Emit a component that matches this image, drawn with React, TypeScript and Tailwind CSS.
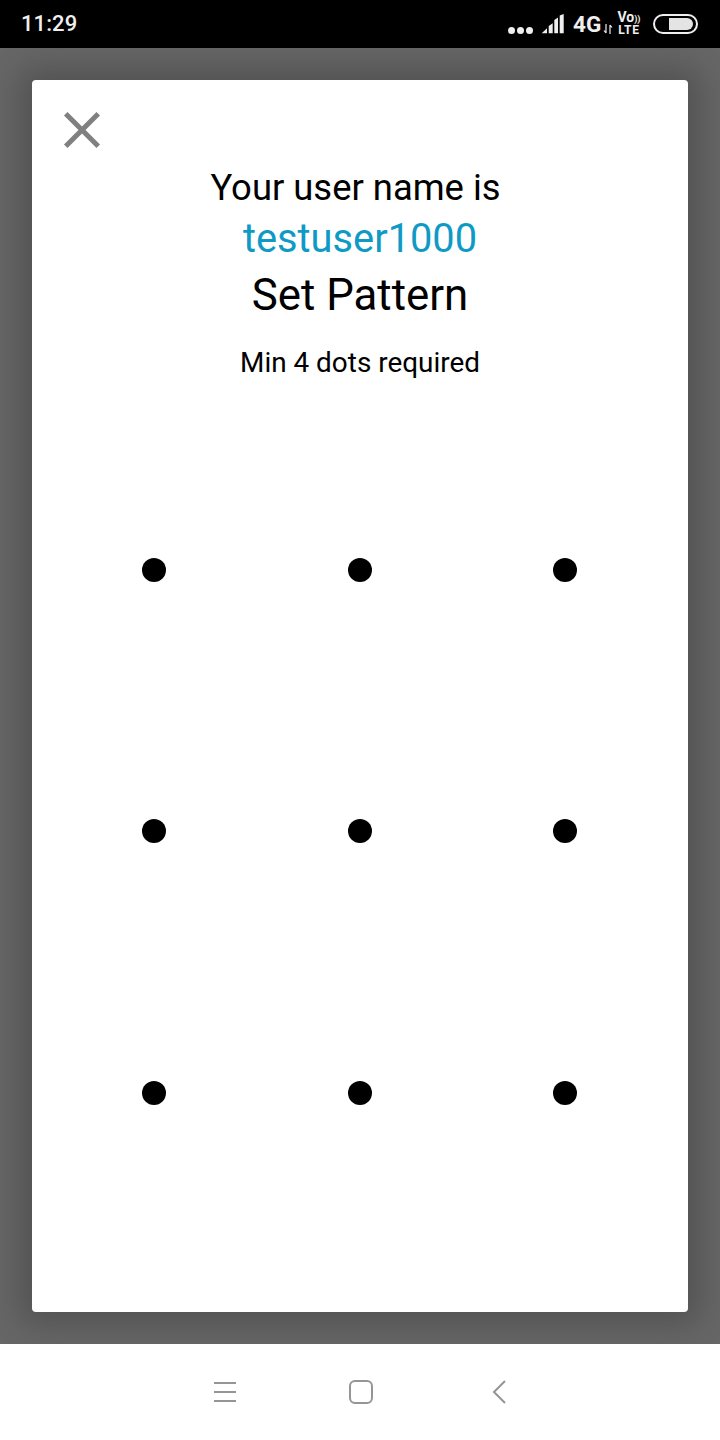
const DOT_KEYS = [1, 2, 3, 4, 5, 6, 7, 8, 9];

function StatusBar() {
  return (
    <div className="flex h-12 items-center justify-between bg-black pl-[21px] pr-[22px] text-[#efefef]">
      <span className="font-['Roboto',sans-serif] text-[22px] font-medium leading-none tracking-[0.1px]">11:29</span>
      <div className="flex items-center">
        <div className="mt-[13px] flex w-[25px] gap-[2px]">
          <span className="size-[7px] rounded-full bg-[#efefef]" />
          <span className="size-[7px] rounded-full bg-[#efefef]" />
          <span className="size-[7px] rounded-full bg-[#efefef]" />
        </div>
        <svg width="24" height="20" viewBox="0 0 24 20" className="ml-[8px]" fill="#efefef">
          <path d="M0.700 19.300L6 14.300v5zM7.700 12l4-2.700v10h-4zM13.300 6L17 3.500v15.800h-3.700zM18.700 1.500L22.700 0v19.300h-4z" />
        </svg>
        <span className="ml-[8px] w-[27px] font-['Roboto',sans-serif] text-[22.500px] font-bold leading-none">4G</span>
        <svg width="10" height="10" viewBox="0 0 10 10" className="ml-[3px] mt-[10px]" stroke="#efefef" strokeWidth="1.200" fill="none">
          <path d="M3 0v9M1 6.500L3 9M7 10V1M7 1l2 2.500" />
        </svg>
        <div className="ml-[4px] flex w-[24px] flex-col items-center font-['Roboto',sans-serif] font-bold">
          <span className="text-[14px] leading-[11px]">
            Vo<span className="text-[9px]">))</span>
          </span>
          <span className="text-[12px] leading-[11px] tracking-[0.8px]">LTE</span>
        </div>
        <div className="ml-[12px] flex h-[20px] w-[45px] items-center justify-end rounded-full border-2 border-[#efefef] pr-[3px]">
          <span className="h-[12px] w-[24px] rounded-r-full rounded-l-[2px] bg-[#e4e4e4]" />
        </div>
      </div>
    </div>
  );
}

function CloseIcon() {
  return (
    <svg width="38" height="38" viewBox="0 0 38 38" stroke="#808080" strokeWidth="5" strokeLinecap="square">
      <path d="M4.500 4.500l29 29M33.500 4.500l-29 29" />
    </svg>
  );
}

function NavBar() {
  return (
    <div className="flex h-24 items-center bg-white pl-[213px]">
      <svg width="24" height="24" viewBox="0 0 24 24" stroke="#959595" strokeWidth="1.800" fill="none">
        <path d="M1 3h22M1 12h22M1 21h22" />
      </svg>
      <svg width="24" height="24" viewBox="0 0 24 24" className="ml-[112px]" stroke="#959595" strokeWidth="2" fill="none">
        <rect x="1" y="1" width="22" height="22" rx="5" />
      </svg>
      <svg width="14" height="24" viewBox="0 0 14 24" className="ml-[119px]" stroke="#959595" strokeWidth="2" fill="none">
        <path d="M13 1L2 12l11 11" />
      </svg>
    </div>
  );
}

export default function App() {
  return (
    <div className="flex h-[1440px] w-[720px] flex-col overflow-hidden font-['Roboto',sans-serif]">
      <StatusBar />
      <main className="flex-1 bg-[#666666] px-8 py-8">
        <div className="flex h-full flex-col rounded-[4px] bg-white shadow-[0_0_32px_12px_rgba(0,0,0,0.2)]">
          <div className="pl-[31px] pt-[31px]">
            <CloseIcon />
          </div>
          <div className="mt-[14px] flex flex-col items-center text-black">
            <p className="pr-[9px] text-[36.400px] leading-[50px]">Your user name is</p>
            <p className="text-[39.800px] leading-[52px] text-[#0f9ac6]">testuser1000</p>
            <p className="text-[43.800px] leading-[60px]">Set Pattern</p>
            <p className="mt-[18px] text-[27.900px] leading-[40px]">Min 4 dots required</p>
          </div>
          <div className="ml-[19.250px] mt-[56.500px] grid h-[784px] grid-cols-[205.500px_205.500px_205.500px] grid-rows-3">
            {DOT_KEYS.map((k) => (
              <div key={k} className="flex items-center justify-center">
                <span className="size-6 rounded-full bg-black" />
              </div>
            ))}
          </div>
        </div>
      </main>
      <NavBar />
    </div>
  );
}
